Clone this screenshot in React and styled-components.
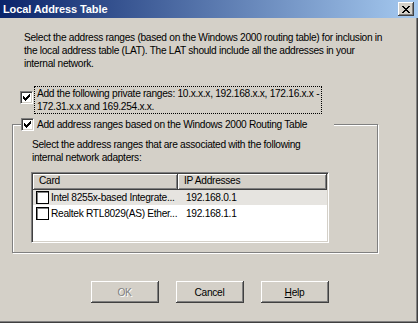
import React from "react";
import styled, { createGlobalStyle } from "styled-components";

const GlobalStyle = createGlobalStyle`
  html, body {
    margin: 0;
    padding: 0;
    background: #d4d0c8;
  }
  body {
    font-family: "Liberation Sans", Arial, sans-serif;
    font-size: 10.2px;
    letter-spacing: -0.3px;
    color: #000;
  }
`;

const adapters = [
  { card: "Intel 8255x-based Integrate...", ip: "192.168.0.1", selected: true },
  { card: "Realtek RTL8029(AS) Ether...", ip: "192.168.1.1", selected: false },
];

const checkColumns = [2, 3, 4, 3, 2, 1, 0];

const CheckMark = () => (
  <svg width="9" height="9" viewBox="0 0 9 9" shapeRendering="crispEdges">
    {checkColumns.map((top, i) => (
      <rect key={i} x={1 + i} y={1 + top} width="1" height="3" fill="#000" />
    ))}
  </svg>
);

const Window = styled.div`
  width: 418px;
  height: 323px;
  box-sizing: border-box;
  background: #d4d0c8;
  display: flex;
  flex-direction: column;
  overflow: hidden;
  box-shadow: inset -1px -1px 0 #404040, inset -2px -2px 0 #808080;
`;

const TitleBar = styled.div`
  height: 18px;
  flex-shrink: 0;
  display: flex;
  align-items: center;
  justify-content: space-between;
  padding: 0 4px 0 3px;
  background: linear-gradient(to right, #0a246a, #a6caf0);
`;

const Title = styled.span`
  color: #fff;
  font-weight: bold;
  font-size: 11px;
  letter-spacing: -0.1px;
`;

const CloseButton = styled.div`
  width: 16px;
  height: 14px;
  box-sizing: border-box;
  background: #d4d0c8;
  display: flex;
  align-items: center;
  justify-content: center;
  box-shadow: inset -1px -1px 0 #404040, inset 1px 1px 0 #fff,
    inset -2px -2px 0 #808080;
`;

const Intro = styled.p`
  margin: 13px 0 0 24px;
  line-height: 13px;
  white-space: nowrap;
`;

const CheckRow = styled.div`
  display: flex;
  align-items: flex-start;
  margin: 16px 0 0 20px;
`;

const Box = styled.span`
  width: 13px;
  height: 13px;
  box-sizing: border-box;
  flex-shrink: 0;
  background: #fff;
  display: flex;
  align-items: center;
  justify-content: center;
  margin-top: ${(p) => p.$top || 0}px;
  border-top: 1px solid #808080;
  border-left: 1px solid #808080;
  border-bottom: 1px solid #fff;
  border-right: 1px solid #fff;
  box-shadow: inset 1px 1px 0 #404040, inset -1px -1px 0 #d4d0c8;
`;

const FocusLabel = styled.span`
  margin-left: 1px;
  padding: 0 2px;
  border: 1px dotted #000;
  line-height: 13px;
  white-space: nowrap;
`;

const Group = styled.fieldset`
  margin: 4px 40px 0 12px;
  padding: 0 8px 9px;
  border: 1px solid #808080;
  box-shadow: inset 1px 1px 0 #fff, 1px 1px 0 #fff;
  min-width: 0;
`;

const Legend = styled.legend`
  display: flex;
  align-items: center;
  padding: 0 27px 0 0;
  background: #d4d0c8;
  line-height: 13px;
  white-space: nowrap;
`;

const LegendText = styled.span`
  margin-left: 3px;
`;

const GroupBody = styled.div`
  padding-left: 10px;
`;

const GroupText = styled.p`
  margin: 7px 0 0;
  padding-left: 1px;
  line-height: 13px;
  white-space: nowrap;
`;

const ListView = styled.div`
  margin-top: 8px;
  width: 298px;
  height: 71px;
  box-sizing: border-box;
  background: #fff;
  border-top: 1px solid #808080;
  border-left: 1px solid #808080;
  border-bottom: 1px solid #fff;
  border-right: 1px solid #fff;
  box-shadow: inset 1px 1px 0 #404040, inset -1px -1px 0 #d4d0c8;
  padding: 1px;
  overflow: hidden;
`;

const HeaderRow = styled.div`
  display: flex;
  height: 15px;
  background: #d4d0c8;
`;

const HeaderCell = styled.div`
  width: ${(p) => p.$width}px;
  box-sizing: border-box;
  padding-left: 6px;
  line-height: 14px;
  box-shadow: inset 1px 1px 0 #fff, inset -1px -1px 0 #808080,
    inset -2px -2px 0 #d4d0c8;
  border-right: 1px solid #404040;
  border-bottom: 1px solid #404040;
  margin-bottom: -1px;
  height: 16px;
`;

const HeaderFill = styled.div`
  flex: 1;
  box-shadow: inset 1px 1px 0 #fff;
  border-bottom: 1px solid #404040;
`;

const Row = styled.div`
  display: flex;
  align-items: center;
  height: 16px;
  background: ${(p) => (p.$selected ? "#e6e4e0" : "#fff")};
`;

const FlatBox = styled.span`
  width: 13px;
  height: 13px;
  box-sizing: border-box;
  flex-shrink: 0;
  margin: 0 2px 0 3px;
  border: 1px solid #000;
  box-shadow: inset 1px 1px 0 #808080;
  background: #fff;
`;

const CardCell = styled.span`
  width: 135px;
  flex-shrink: 0;
  white-space: nowrap;
`;

const IpCell = styled.span`
  white-space: nowrap;
`;

const ButtonRow = styled.div`
  display: flex;
  justify-content: center;
  gap: 17px;
  margin: 28px 0 0 1px;
`;

const Button = styled.div`
  width: 68px;
  height: 22px;
  box-sizing: border-box;
  display: flex;
  align-items: center;
  justify-content: center;
  background: #d4d0c8;
  color: ${(p) => (p.$disabled ? "#808080" : "#000")};
  text-shadow: ${(p) => (p.$disabled ? "1px 1px 0 #fff" : "none")};
  box-shadow: inset -1px -1px 0 #404040, inset 1px 1px 0 #fff,
    inset -2px -2px 0 #808080;
`;

const Hotkey = styled.span`
  text-decoration: underline;
`;

export default function App() {
  return (
    <>
      <GlobalStyle />
      <Window>
        <TitleBar>
          <Title>Local Address Table</Title>
          <CloseButton>
            <svg width="8" height="7" viewBox="0 0 8 7" shapeRendering="crispEdges">
              <path
                d="M0 0h2v1h1v1h2V1h1V0h2v1H7v1H6v1H5v1h1v1h1v1h1v1H6V6H5V5H3v1H2v1H0V6h1V5h1V4h1V3H2V2H1V1H0z"
                fill="#000"
              />
            </svg>
          </CloseButton>
        </TitleBar>

        <Intro>
          Select the address ranges (based on the Windows 2000 routing table) for inclusion in
          <br />
          the local address table (LAT). The LAT should include all the addresses in your
          <br />
          internal network.
        </Intro>

        <CheckRow>
          <Box $top={5}>
            <CheckMark />
          </Box>
          <FocusLabel>
            Add the following private ranges: 10.x.x.x, 192.168.x.x, 172.16.x.x -
            <br />
            172.31.x.x and 169.254.x.x.
          </FocusLabel>
        </CheckRow>

        <Group>
          <Legend>
            <Box>
              <CheckMark />
            </Box>
            <LegendText>Add address ranges based on the Windows 2000 Routing Table</LegendText>
          </Legend>
          <GroupBody>
            <GroupText>
              Select the address ranges that are associated with the following
              <br />
              internal network adapters:
            </GroupText>
            <ListView>
              <HeaderRow>
                <HeaderCell $width={145}>Card</HeaderCell>
                <HeaderCell $width={149}>IP Addresses</HeaderCell>
                <HeaderFill />
              </HeaderRow>
              {adapters.map((a) => (
                <Row key={a.card} $selected={a.selected}>
                  <FlatBox />
                  <CardCell>{a.card}</CardCell>
                  <IpCell>{a.ip}</IpCell>
                </Row>
              ))}
            </ListView>
          </GroupBody>
        </Group>

        <ButtonRow>
          <Button $disabled>OK</Button>
          <Button>Cancel</Button>
          <Button>
            <span>
              <Hotkey>H</Hotkey>elp
            </span>
          </Button>
        </ButtonRow>
      </Window>
    </>
  );
}
